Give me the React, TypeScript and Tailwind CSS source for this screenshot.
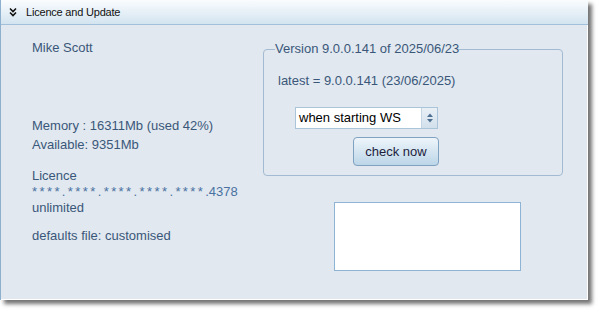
import React from 'react';

const font = { fontFamily: '"Liberation Sans", Arial, sans-serif' };

const DoubleChevron = () => (
  <svg width="8" height="10" viewBox="0 0 8 10" fill="none" stroke="#111" strokeWidth="1.6">
    <path d="M1 1.5 L4 4.5 L7 1.5" />
    <path d="M1 5.5 L4 8.5 L7 5.5" />
  </svg>
);

const SpinArrows = () => (
  <svg width="8" height="12" viewBox="0 0 8 12">
    <path d="M4 1.5 L7 5 L1 5 Z" fill="#4d7093" />
    <path d="M4 10.5 L7 7 L1 7 Z" fill="#4d7093" />
  </svg>
);

export default function App() {
  return (
    <div className="w-[603px] h-[315px] bg-white text-[13px]" style={font}>
      <div className="w-[588px] h-[300px] flex flex-col bg-[#e1e8f0] border-l border-[#8eb0cf] shadow-[4px_4px_4px_rgba(0,0,0,0.55)]">
        {/* Header */}
        <div className="h-[25px] shrink-0 flex items-center gap-[9px] pl-[8px] bg-gradient-to-b from-[#fafcfe] to-[#d3e4f0] border-b border-[#a3c0db] text-[#111] text-[11px] tracking-[-0.2px]">
          <DoubleChevron />
          <span>Licence and Update</span>
        </div>

        {/* Body */}
        <div className="flex-1 flex pt-[15px] border-r border-b border-white text-[#3a5779] leading-[16px]">
          <div className="w-[262px] shrink-0 pl-[31px] flex flex-col">
            <div>Mike Scott</div>
            <div className="mt-[60px] leading-[19px]">Memory : 16311Mb (used 42%)</div>
            <div className="leading-[19px]">Available: 9351Mb</div>
            <div className="mt-[14px]">Licence</div>
            <div className="text-[#4a72a0]">
              <span className="tracking-[2.4px]">****.****.****.****.****</span>
              <span>.4378</span>
            </div>
            <div>unlimited</div>
            <div className="mt-[12px]">defaults file: customised</div>
          </div>

          <div className="flex flex-col">
            <fieldset className="w-[300px] mt-[1px] border border-[#a2bbd2] rounded-[4px] pl-[14px] pb-[9px]">
              <legend className="ml-[-3px] px-0">Version 9.0.0.141 of 2025/06/23</legend>
              <div className="mt-[16px]">latest = 9.0.0.141 (23/06/2025)</div>
              <div className="w-[160px] flex flex-col items-end mt-[18px]">
                <div className="w-[143px] h-[22px] flex bg-white border border-[#aac4da] text-black">
                  <span className="flex-1 flex items-center pl-[3px]">when starting WS</span>
                  <span className="w-[16px] flex items-center justify-center bg-gradient-to-b from-[#e9f0f6] to-[#d2e0ec] border-l border-[#c3d4e3]">
                    <SpinArrows />
                  </span>
                </div>
                <button className="w-[86px] h-[29px] mt-[8px] mr-[-1px] rounded-[4px] border border-[#7fa2c0] bg-gradient-to-b from-[#eef5fa] to-[#bcd6e8] text-[#1c1c3c]">
                  check now
                </button>
              </div>
            </fieldset>
            <div className="w-[187px] h-[69px] ml-[71px] mt-[26px] bg-white border border-[#8db4d4]" />
          </div>
        </div>
      </div>
    </div>
  );
}
